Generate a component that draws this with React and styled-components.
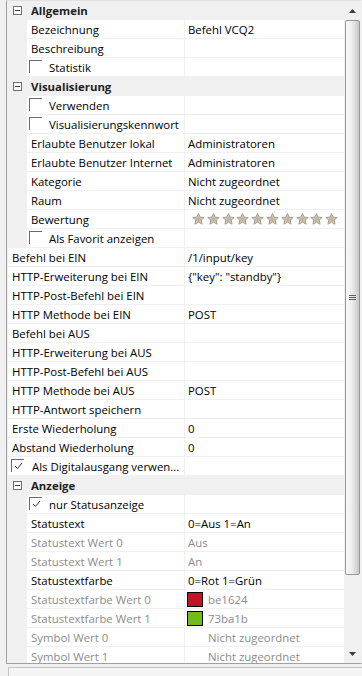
import React from "react";
import styled, { createGlobalStyle } from "styled-components";

const GlobalStyle = createGlobalStyle`
  html, body {
    margin: 0;
    padding: 0;
    background: #f0f0f0;
  }
  body {
    font-family: "Open Sans", "Noto Sans", sans-serif;
    font-size: 11.4px;
    color: #000;
  }
`;

const Window = styled.div`
  width: 362px;
  height: 676px;
  background: #f0f0f0;
  display: flex;
  flex-direction: column;
  overflow: hidden;
`;

const Grid = styled.div`
  margin-left: 6px;
  height: 664px;
  flex: none;
  box-sizing: border-box;
  border: 1px solid #a0a0a0;
  border-top-color: #e2e2e2;
  border-right-color: #f0f0f0;
  display: flex;
  background: #fff;
`;

const Rows = styled.div`
  flex: 1;
  min-width: 0;
  overflow: hidden;
  display: flex;
  flex-direction: column;
`;

const CategoryRow = styled.div`
  flex: none;
  height: 19px;
  background: #f0f0f0;
  display: flex;
  align-items: center;
  font-weight: 700;
  color: #1e1e1e;
`;

const Expander = styled.span`
  position: relative;
  box-sizing: border-box;
  width: 9px;
  height: 9px;
  margin: 0 9px 0 6px;
  border: 1px solid #6f6f6f;
  background: #fff;
  &::after {
    content: "";
    position: absolute;
    left: 1px;
    right: 1px;
    top: 3px;
    height: 1px;
    background: #3c3c3c;
  }
`;

const PropRow = styled.div`
  flex: none;
  height: 19px;
  display: grid;
  grid-template-columns: ${(p) => (p.$top ? "1px 176px" : "20px 157px")} 1fr;
  color: ${(p) => (p.$dim ? "#8c8c8c" : "#000")};
`;

const Margin = styled.div`
  background: #f0f0f0;
`;

const NameCell = styled.div`
  box-sizing: border-box;
  border-bottom: 1px solid #f0f0f0;
  display: flex;
  align-items: center;
  padding-left: ${(p) => (p.$check ? (p.$top ? 3 : 2) : 4)}px;
  gap: ${(p) => (p.$top ? 8 : 7)}px;
  white-space: nowrap;
  overflow: hidden;
`;

const ValueCell = styled.div`
  box-sizing: border-box;
  border-bottom: 1px solid #f0f0f0;
  border-left: 1px solid #f0f0f0;
  display: flex;
  align-items: center;
  padding-left: ${(p) => (p.$media ? 2 : 3)}px;
  gap: 5px;
  white-space: nowrap;
  overflow: hidden;
`;

const Label = styled.span`
  overflow: hidden;
`;

const CheckBox = styled.span`
  flex: none;
  box-sizing: border-box;
  width: 13px;
  height: 13px;
  border-top: 1px solid #6a6a6a;
  border-left: 1px solid #6a6a6a;
  display: flex;
  align-items: center;
  justify-content: center;
  margin-top: -1px;
`;

const Swatch = styled.span`
  flex: none;
  box-sizing: border-box;
  width: 16px;
  height: 15px;
  border: 1px solid ${(p) => (p.$color ? "#000" : "transparent")};
  background: ${(p) => p.$color || "transparent"};
`;

const Stars = styled.div`
  display: flex;
  gap: 1.8px;
  margin-left: 4px;
`;

const ScrollBar = styled.div`
  flex: none;
  width: 17px;
  display: flex;
  flex-direction: column;
  background: #f0f0f0;
`;

const ArrowButton = styled.div`
  flex: none;
  height: ${(p) => p.$h}px;
  display: flex;
  align-items: center;
  justify-content: center;
`;

const Track = styled.div`
  flex: 1;
  padding: 0 1px;
  display: flex;
  flex-direction: column;
`;

const Thumb = styled.div`
  box-sizing: border-box;
  height: 555px;
  border: 1px solid #979797;
  border-radius: 2px;
  background: linear-gradient(to right, #f8f8f8 0%, #efefef 40%, #dadada 75%, #c6c6c6 100%);
  display: flex;
  align-items: center;
  justify-content: center;
`;

const Footer = styled.div`
  flex: 1;
  padding: 3px 0 0 8px;
  display: flex;
`;

const DescBox = styled.div`
  flex: 1;
  border: 1px solid #c4c4c4;
  border-bottom: none;
  border-right: none;
  background: #f4f4f4;
`;

const rows = [
  { cat: "Allgemein" },
  { label: "Bezeichnung", value: "Befehl VCQ2" },
  { label: "Beschreibung" },
  { label: "Statistik", check: false },
  { cat: "Visualisierung" },
  { label: "Verwenden", check: false },
  { label: "Visualisierungskennwort", check: false },
  { label: "Erlaubte Benutzer lokal", value: "Administratoren" },
  { label: "Erlaubte Benutzer Internet", value: "Administratoren" },
  { label: "Kategorie", value: "Nicht zugeordnet" },
  { label: "Raum", value: "Nicht zugeordnet" },
  { label: "Bewertung", stars: 10 },
  { label: "Als Favorit anzeigen", check: false },
  { label: "Befehl bei EIN", value: "/1/input/key", top: true },
  { label: "HTTP-Erweiterung bei EIN", value: '{"key": "standby"}', top: true },
  { label: "HTTP-Post-Befehl bei EIN", top: true },
  { label: "HTTP Methode bei EIN", value: "POST", top: true },
  { label: "Befehl bei AUS", top: true },
  { label: "HTTP-Erweiterung bei AUS", top: true },
  { label: "HTTP-Post-Befehl bei AUS", top: true },
  { label: "HTTP Methode bei AUS", value: "POST", top: true },
  { label: "HTTP-Antwort speichern", top: true },
  { label: "Erste Wiederholung", value: "0", top: true },
  { label: "Abstand Wiederholung", value: "0", top: true },
  { label: "Als Digitalausgang verwen...", check: true, top: true },
  { cat: "Anzeige" },
  { label: "nur Statusanzeige", check: true },
  { label: "Statustext", value: "0=Aus 1=An" },
  { label: "Statustext Wert 0", value: "Aus", dim: true },
  { label: "Statustext Wert 1", value: "An", dim: true },
  { label: "Statustextfarbe", value: "0=Rot 1=Grün" },
  { label: "Statustextfarbe Wert 0", value: "be1624", swatch: "#be1624", dim: true },
  { label: "Statustextfarbe Wert 1", value: "73ba1b", swatch: "#73ba1b", dim: true },
  { label: "Symbol Wert 0", value: "Nicht zugeordnet", media: true, dim: true },
  { label: "Symbol Wert 1", value: "Nicht zugeordnet", media: true, dim: true },
];

function Check({ checked }) {
  return (
    <CheckBox>
      {checked && (
        <svg width="9" height="8" viewBox="0 0 9 8">
          <polyline points="1,4 3.5,6.5 8,1" fill="none" stroke="#333" strokeWidth="1" />
        </svg>
      )}
    </CheckBox>
  );
}

function Star() {
  return (
    <svg width="13" height="12" viewBox="0 0 13 12">
      <defs>
        <radialGradient id="sg" cx="50%" cy="55%" r="55%">
          <stop offset="0%" stopColor="#b9b09a" />
          <stop offset="100%" stopColor="#e2dccd" />
        </radialGradient>
      </defs>
      <polygon
        points="6.5,0.6 8.2,4.2 12.2,4.5 9.2,7.1 10.1,11.2 6.5,9.1 2.9,11.2 3.8,7.1 0.8,4.5 4.8,4.2"
        fill="url(#sg)"
        stroke="#9d9582"
        strokeWidth="0.9"
        strokeLinejoin="round"
      />
    </svg>
  );
}

function Row({ r }) {
  if (r.cat) {
    return (
      <CategoryRow>
        <Expander />
        {r.cat}
      </CategoryRow>
    );
  }
  const hasCheck = r.check !== undefined;
  return (
    <PropRow $top={r.top} $dim={r.dim}>
      <Margin />
      <NameCell $check={hasCheck} $top={r.top}>
        {hasCheck && <Check checked={r.check} />}
        <Label>{r.label}</Label>
      </NameCell>
      <ValueCell $media={r.swatch || r.media}>
        {(r.swatch || r.media) && <Swatch $color={r.swatch} />}
        {r.stars ? (
          <Stars>
            {Array.from({ length: r.stars }, (_, i) => (
              <Star key={i} />
            ))}
          </Stars>
        ) : (
          r.value
        )}
      </ValueCell>
    </PropRow>
  );
}

export default function App() {
  return (
    <Window>
      <GlobalStyle />
      <Grid>
        <Rows>
          {rows.map((r, i) => (
            <Row key={i} r={r} />
          ))}
        </Rows>
        <ScrollBar>
          <ArrowButton $h={19}>
            <svg width="7" height="4" viewBox="0 0 7 4">
              <polygon points="3.5,0 7,4 0,4" fill="#3a3a3a" />
            </svg>
          </ArrowButton>
          <Track>
            <Thumb>
              <svg width="7" height="5" viewBox="0 0 7 5">
                <path d="M0 0.5H7M0 2.5H7M0 4.5H7" stroke="#5e5e5e" strokeWidth="1" />
              </svg>
            </Thumb>
          </Track>
          <ArrowButton $h={18}>
            <svg width="7" height="4" viewBox="0 0 7 4">
              <polygon points="0,0 7,0 3.5,4" fill="#3a3a3a" />
            </svg>
          </ArrowButton>
        </ScrollBar>
      </Grid>
      <Footer>
        <DescBox />
      </Footer>
    </Window>
  );
}
